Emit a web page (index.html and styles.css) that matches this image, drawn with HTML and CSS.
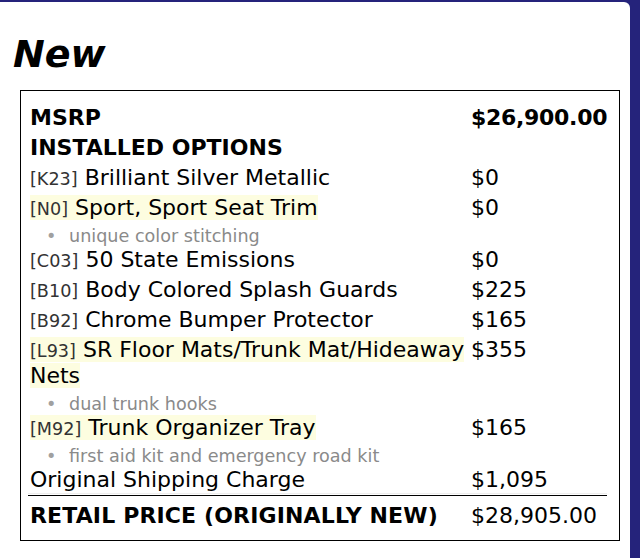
FILE: index.html
```html
<!DOCTYPE html>
<html lang="en">
<head>
<meta charset="utf-8">
<title>New</title>
<link rel="stylesheet" href="styles.css">
</head>
<body>
<div class="card">
  <h1 class="title">New</h1>
  <div class="box">
    <div class="sheet">
      <div class="label strong">MSRP</div>
      <div class="price strong tight">$26,900.00</div>

      <div class="label strong">INSTALLED OPTIONS</div>
      <div class="price"></div>

      <div class="label"><span class="code">[K23]</span> Brilliant Silver Metallic</div>
      <div class="price">$0</div>

      <div class="label"><span class="hl"><span class="code">[N0]</span> Sport, Sport Seat Trim</span>
        <ul class="notes"><li>unique color stitching</li></ul>
      </div>
      <div class="price">$0</div>

      <div class="label"><span class="code">[C03]</span> 50 State Emissions</div>
      <div class="price">$0</div>

      <div class="label"><span class="code">[B10]</span> Body Colored Splash Guards</div>
      <div class="price">$225</div>

      <div class="label"><span class="code">[B92]</span> Chrome Bumper Protector</div>
      <div class="price">$165</div>

      <div class="label"><span class="hl"><span class="code">[L93]</span> SR Floor Mats/Trunk Mat/Hideaway Nets</span>
        <ul class="notes"><li>dual trunk hooks</li></ul>
      </div>
      <div class="price">$355</div>

      <div class="label"><span class="hl"><span class="code">[M92]</span> Trunk Organizer Tray</span>
        <ul class="notes"><li>first aid kit and emergency road kit</li></ul>
      </div>
      <div class="price">$165</div>

      <div class="label ship">Original Shipping Charge</div>
      <div class="price ship">$1,095</div>
    </div>
    <div class="sheet total">
      <div class="label strong wide">RETAIL PRICE (ORIGINALLY NEW)</div>
      <div class="price">$28,905.00</div>
    </div>
  </div>
</div>
</body>
</html>
```

FILE: styles.css
```css
html, body {
  margin: 0;
  padding: 0;
}
body {
  background: #25237b;
  font-family: "DejaVu Sans", "Liberation Sans", sans-serif;
  color: #000;
  height: 558px;
  overflow: hidden;
}
.card {
  background: #fff;
  margin: 2px 10px 0 0;
  border-radius: 0 6px 0 0;
  padding: 30px 0 40px 0;
}
.title {
  margin: 0 0 14px 0;
  padding-left: 13px;
  font-size: 38px;
  line-height: 44px;
  font-weight: bold;
  font-style: italic;
}
.box {
  margin-left: 20px;
  width: 579px;
  border: 1px solid #000;
  padding: 14px 12px 11px 7px;
}
.sheet {
  display: grid;
  grid-template-columns: 441px 1fr;
  row-gap: 4.15px;
  font-size: 22px;
  line-height: 26px;
}
.label {
  padding-left: 2px;
}
.price {
  padding-left: 2px;
  white-space: nowrap;
}
.strong {
  font-weight: bold;
}
.tight {
  letter-spacing: -0.3px;
}
.wide {
  letter-spacing: 0.14px;
}
.code {
  font-size: 17.6px;
  line-height: 16px;
  color: #333;
}
.hl {
  background: #fdfde0;
}
.notes {
  list-style: none;
  margin: 4px 0 -5px 0;
  padding: 0 0 0 39px;
  font-size: 17.6px;
  line-height: 22.5px;
  color: #8a8a8a;
}
.notes li::before {
  content: "\2022";
  display: inline-block;
  width: 23px;
  margin-left: -23px;
  color: #a0a0a0;
}
.ship {
  border-bottom: 1px solid #eeeeee;
}
.total {
  margin-top: 1px;
  border-top: 1px solid #000;
  padding-top: 7px;
}
```
